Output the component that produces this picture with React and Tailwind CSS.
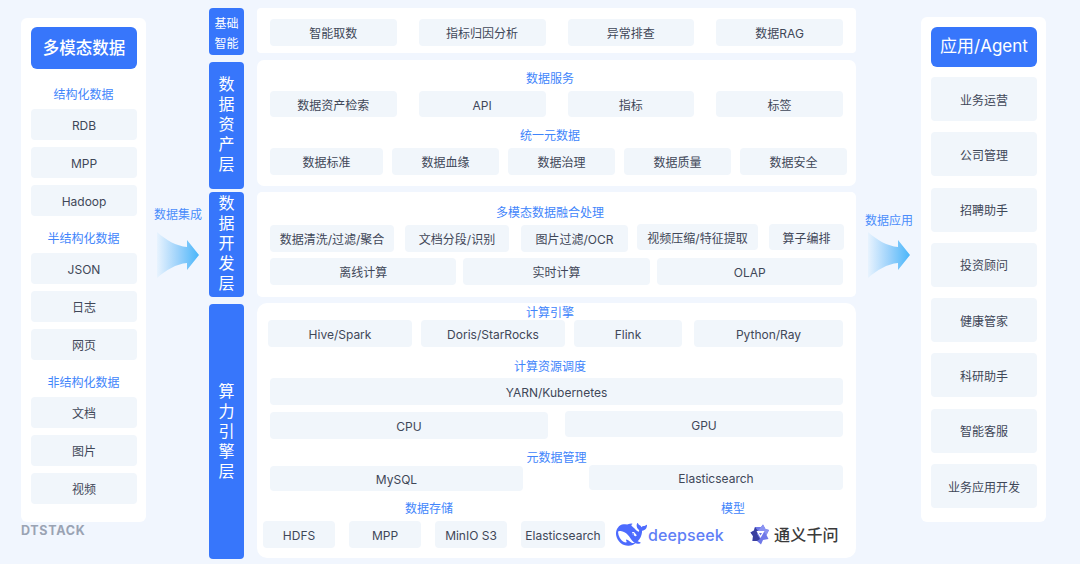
import React from "react";

const fontStack = "font-['Inter','Noto_Sans_CJK_SC',sans-serif]";

const Chip = ({ children, className = "" }) => (
  <div className={`flex items-center justify-center rounded-[4px] bg-[#f1f6fb] pt-[3px] text-xs text-[#3f4758] ${className}`}>
    {children}
  </div>
);

const Label = ({ children, className = "" }) => (
  <div className={`h-4 pt-[2px] text-center text-xs leading-4 text-[#3f85fb] ${className}`}>{children}</div>
);

const Layer = ({ text, className = "", textClass = "text-base leading-5" }) => (
  <div className={`flex w-[35px] flex-col items-center justify-center rounded-[4px] bg-[#3776fb] text-white ${className}`}>
    {Array.from(text).map((c, i) => (
      <span key={i} className={textClass}>{c}</span>
    ))}
  </div>
);

const Arrow = ({ id }) => (
  <svg width="44" height="48" viewBox="0 0 44 48" className="mx-auto">
    <defs>
      <linearGradient id={id} x1="0" y1="0" x2="1" y2="0">
        <stop offset="0" stopColor="#e8f3fe" />
        <stop offset="0.5" stopColor="#9dd2fb" />
        <stop offset="1" stopColor="#49b6fa" />
      </linearGradient>
    </defs>
    <path d="M1 1 C10 9 20 15 31 16 L31 9 L43 24 L31 39 L31 32 C20 33 10 39 1 47 Z" fill={`url(#${id})`} />
  </svg>
);

const DeepseekLogo = () => (
  <svg width="31" height="31" viewBox="0 0 24 24" fill="#4d6bfe" className="shrink-0">
    <path d="M23.748 4.482c-.254-.124-.364.113-.512.234-.051.039-.094.09-.137.136-.372.397-.806.657-1.373.626-.829-.046-1.537.214-2.163.848-.133-.782-.575-1.248-1.247-1.548-.352-.156-.708-.311-.955-.65-.172-.241-.219-.51-.305-.774-.055-.16-.11-.323-.293-.35-.2-.031-.278.136-.356.276-.313.572-.434 1.202-.422 1.84.027 1.436.633 2.58 1.838 3.393.137.093.172.187.129.323-.082.28-.18.552-.266.833-.055.179-.137.217-.329.14a5.526 5.526 0 01-1.736-1.18c-.857-.828-1.631-1.742-2.597-2.458a11.365 11.365 0 00-.689-.471c-.985-.957.13-1.743.388-1.836.27-.098.093-.432-.779-.428-.872.004-1.67.295-2.687.684a3.055 3.055 0 01-.465.137 9.597 9.597 0 00-2.883-.102c-1.885.21-3.39 1.102-4.497 2.623C.082 8.606-.231 10.684.152 12.85c.403 2.284 1.569 4.175 3.36 5.653 1.858 1.533 3.997 2.284 6.438 2.14 1.482-.085 3.133-.284 4.994-1.86.47.234.962.327 1.78.397.63.059 1.236-.03 1.705-.128.735-.156.684-.837.419-.961-2.155-1.004-1.682-.595-2.113-.926 1.096-1.296 2.746-2.642 3.392-7.003.05-.347.007-.565 0-.845-.004-.17.035-.237.23-.256a4.173 4.173 0 001.545-.475c1.396-.763 1.96-2.015 2.093-3.517.02-.23-.004-.467-.247-.588zM11.581 18c-2.089-1.642-3.102-2.183-3.52-2.16-.392.024-.321.471-.235.763.09.288.207.486.371.739.114.167.192.416-.113.603-.673.416-1.842-.14-1.897-.167-1.361-.802-2.5-1.86-3.301-3.307-.774-1.393-1.224-2.887-1.298-4.482-.02-.386.093-.522.477-.592a4.696 4.696 0 011.529-.039c2.132.312 3.946 1.265 5.468 2.774.868.86 1.525 1.887 2.202 2.891.72 1.066 1.494 2.082 2.48 2.914.348.292.625.514.891.677-.802.09-2.14.11-3.054-.614zm1-6.44a.306.306 0 01.415-.287.302.302 0 01.2.288.306.306 0 01-.31.307.303.303 0 01-.304-.308zm3.11 1.596c-.2.081-.399.151-.59.16a1.245 1.245 0 01-.798-.254c-.274-.23-.47-.358-.552-.758a1.73 1.73 0 01.016-.588c.07-.327-.008-.537-.239-.727-.187-.156-.426-.199-.688-.199a.559.559 0 01-.254-.078c-.11-.054-.2-.19-.114-.358.028-.054.16-.186.192-.21.356-.202.767-.136 1.146.016.352.144.618.408 1.001.782.391.451.462.576.685.914.176.265.336.537.445.848.067.195-.019.354-.25.452z" />
  </svg>
);

const TongyiLogo = () => (
  <svg width="20" height="21" viewBox="0 0 20 21" fill="none" className="shrink-0">
    <path d="M5 3 L11 3 L13 0.5 L15.5 5 L19 6 L16.5 11 L18.5 15 L13 16 L11 20.5 L7 17 L2.5 17 L3 12 L0.5 8.5 L4 6.5 Z" fill="#6f78e8" />
    <path d="M11 3 L13 0.5 L15.5 5 L19 6 L16.5 11 L13.5 7 L8 7 Z" fill="#8a93f2" />
    <path d="M0.5 8.5 L4 6.5 L5 3 L8 7 L7 10 L10 15 L7 17 L2.5 17 L3 12 Z" fill="#3a3f9e" />
    <path d="M6.5 7 H14.5 L10.5 14 Z" fill="#ffffff" />
    <path d="M9 9 H12 L10.5 11.5 Z" fill="#6f78e8" />
  </svg>
);

const App = () => {
  const sources = [
    ["结构化数据", ["RDB", "MPP", "Hadoop"], "mt-[16px]"],
    ["半结构化数据", ["JSON", "日志", "网页"], "mt-[13px]"],
    ["非结构化数据", ["文档", "图片", "视频"], "mt-[13px]"],
  ];
  const apps = ["业务运营", "公司管理", "招聘助手", "投资顾问", "健康管家", "科研助手", "智能客服", "业务应用开发"];

  return (
    <div className={`flex h-[564px] w-[1080px] overflow-hidden bg-[#f1f6fe] ${fontStack}`}>
      {/* left column */}
      <div className="ml-[21px] mt-[18px] w-[125px]">
        <div className="h-[504px] rounded-[6px] bg-white px-[10px] pt-[9px]">
          <div className="flex h-[42px] w-[106px] items-center justify-center rounded-[6px] bg-[#3776fb] text-[16.5px] font-medium text-white">
            多模态数据
          </div>
          {sources.map(([title, items, gap]) => (
            <div key={title} className={gap}>
              <Label>{title}</Label>
              <div className="mt-[8px] flex flex-col gap-[7px]">
                {items.map((t) => (
                  <Chip key={t} className="h-[31px] w-[106px]">{t}</Chip>
                ))}
              </div>
            </div>
          ))}
        </div>
        <div className="mt-[2px] text-[12.5px] leading-[14px] font-bold tracking-[0.7px] text-[#9aa3b3]">DTSTACK</div>
      </div>

      {/* integration arrow */}
      <div className="w-[63px] pl-[1px] pt-[207px]">
        <div className="h-4 text-center text-xs leading-4 whitespace-nowrap text-[#4a8dfb]">数据集成</div>
        <div className="mt-[8px]"><Arrow id="arrow-in" /></div>
      </div>

      {/* layer names */}
      <div className="flex w-[35px] flex-col pt-2">
        <Layer text="基础智能" className="h-[47px] flex-row flex-wrap content-center pt-[5px]" textClass="w-3 text-xs leading-5" />
        <Layer text="数据资产层" className="mt-[7px] h-[127px] pb-[3px]" />
        <Layer text="数据开发层" className="mt-[3px] h-[105px] pb-[3px]" />
        <Layer text="算力引擎层" className="mt-[7px] h-[255px] pb-[2px]" />
      </div>

      {/* panels */}
      <div className="ml-[13px] flex w-[599px] flex-col pt-2">
        <div className="h-[45px] rounded-[4px] bg-white pt-[11px]">
          <div className="mx-[13px] grid grid-cols-4 gap-x-[22px]">
            {["智能取数", "指标归因分析", "异常排查", "数据RAG"].map((t) => (
              <Chip key={t} className="h-[27px]">{t}</Chip>
            ))}
          </div>
        </div>

        <div className="mt-[7px] h-[126px] rounded-[7px] bg-white pt-[9px]">
          <Label className="pr-[13px]">数据服务</Label>
          <div className="mx-[13px] mt-[6px] grid grid-cols-4 gap-x-[22px]">
            {["数据资产检索", "API", "指标", "标签"].map((t) => (
              <Chip key={t} className="h-[26px]">{t}</Chip>
            ))}
          </div>
          <Label className="mt-[9px] pr-[13px]">统一元数据</Label>
          <div className="ml-[13px] mt-[6px] flex gap-[9px]">
            {["数据标准", "数据血缘", "数据治理", "数据质量", "数据安全"].map((t, i) => (
              <Chip key={t} className={`h-[27px] ${i === 0 ? "w-[113px]" : "w-[107px]"}`}>{t}</Chip>
            ))}
          </div>
        </div>

        <div className="mt-[6px] h-[105px] rounded-[5px] bg-white pt-[11px]">
          <Label className="pr-[13px]">多模态数据融合处理</Label>
          <div className="ml-[13px] mt-[5px] flex h-[28px] items-start">
            <Chip className="mt-[1px] h-[27px] w-[124px]">数据清洗/过滤/聚合</Chip>
            <Chip className="ml-[11px] mt-[1px] h-[27px] w-[104px]">文档分段/识别</Chip>
            <Chip className="ml-[12px] mt-[1px] h-[27px] w-[107px]">图片过滤/OCR</Chip>
            <Chip className="ml-[9px] h-[26px] w-[121px]">视频压缩/特征提取</Chip>
            <Chip className="ml-[11px] h-[26px] w-[75px]">算子编排</Chip>
          </div>
          <div className="mx-[13px] mt-[6px] grid grid-cols-3 gap-x-[7px]">
            {["离线计算", "实时计算", "OLAP"].map((t) => (
              <Chip key={t} className="h-[27px]">{t}</Chip>
            ))}
          </div>
        </div>

        <div className="mt-[6px] h-[255px] rounded-[10px] bg-white">
          <Label className="pr-[13px]">计算引擎</Label>
          <div className="ml-[11px] mt-[1px] flex">
            <Chip className="h-[27px] w-[144px]">Hive/Spark</Chip>
            <Chip className="ml-[9px] h-[27px] w-[144px]">Doris/StarRocks</Chip>
            <Chip className="ml-[9px] h-[27px] w-[108px]">Flink</Chip>
            <Chip className="ml-[12px] h-[27px] w-[149px]">Python/Ray</Chip>
          </div>
          <Label className="mt-[10px] pr-[13px]">计算资源调度</Label>
          <Chip className="mx-[13px] mt-[5px] h-[27px]">YARN/Kubernetes</Chip>
          <div className="ml-[13px] mt-[6px] flex h-[28px] items-start">
            <Chip className="mt-[1px] h-[27px] w-[278px]">CPU</Chip>
            <Chip className="ml-[17px] h-[26px] w-[278px]">GPU</Chip>
          </div>
          <Label className="mt-[9px]">元数据管理</Label>
          <div className="ml-[13px] mt-[1px] flex h-[26px] items-start">
            <Chip className="mt-[1px] h-[25px] w-[253px]">MySQL</Chip>
            <Chip className="ml-[66px] h-[25px] w-[254px]">Elasticsearch</Chip>
          </div>
          <div className="ml-[6px] mt-[8px] flex">
            <Label className="w-[332px]">数据存储</Label>
            <Label className="ml-[28px] w-[220px]">模型</Label>
          </div>
          <div className="ml-[6px] mt-[6px] flex h-[27px] items-center whitespace-nowrap">
            <Chip className="h-[27px] w-[72px]">HDFS</Chip>
            <Chip className="ml-[14px] h-[27px] w-[72px]">MPP</Chip>
            <Chip className="ml-[14px] h-[27px] w-[72px]">MinIO S3</Chip>
            <Chip className="ml-[14px] h-[27px] w-[84px]">Elasticsearch</Chip>
            <div className="ml-[11px] flex w-[104px] shrink-0 items-center">
              <DeepseekLogo />
              <span className="ml-[1px] text-base leading-none font-medium tracking-[0.1px] text-[#5f7ff6]">deepseek</span>
            </div>
            <div className="ml-[30px] flex shrink-0 items-center">
              <TongyiLogo />
              <span className="ml-[4px] text-base leading-none font-medium tracking-[0.2px] text-[#3a3a3a]">通义千问</span>
            </div>
          </div>
        </div>
      </div>

      {/* application arrow */}
      <div className="w-[65px] pl-[1px] pt-[213px]">
        <div className="h-4 text-center text-xs leading-4 whitespace-nowrap text-[#4a8dfb]">数据应用</div>
        <div className="mt-[2px]"><Arrow id="arrow-out" /></div>
      </div>

      {/* right column */}
      <div className="mt-[17px] h-[505px] w-[125px] rounded-[6px] bg-white px-[10px] pt-[10px]">
        <div className="flex h-[40px] w-[106px] items-center justify-center rounded-[6px] bg-[#3776fb] text-[17px] text-white">
          应用/Agent
        </div>
        <div className="mt-[10px] flex flex-col gap-[11.3px]">
          {apps.map((t) => (
            <Chip key={t} className="h-[44px] w-[106px]">{t}</Chip>
          ))}
        </div>
      </div>
    </div>
  );
};

export default App;
